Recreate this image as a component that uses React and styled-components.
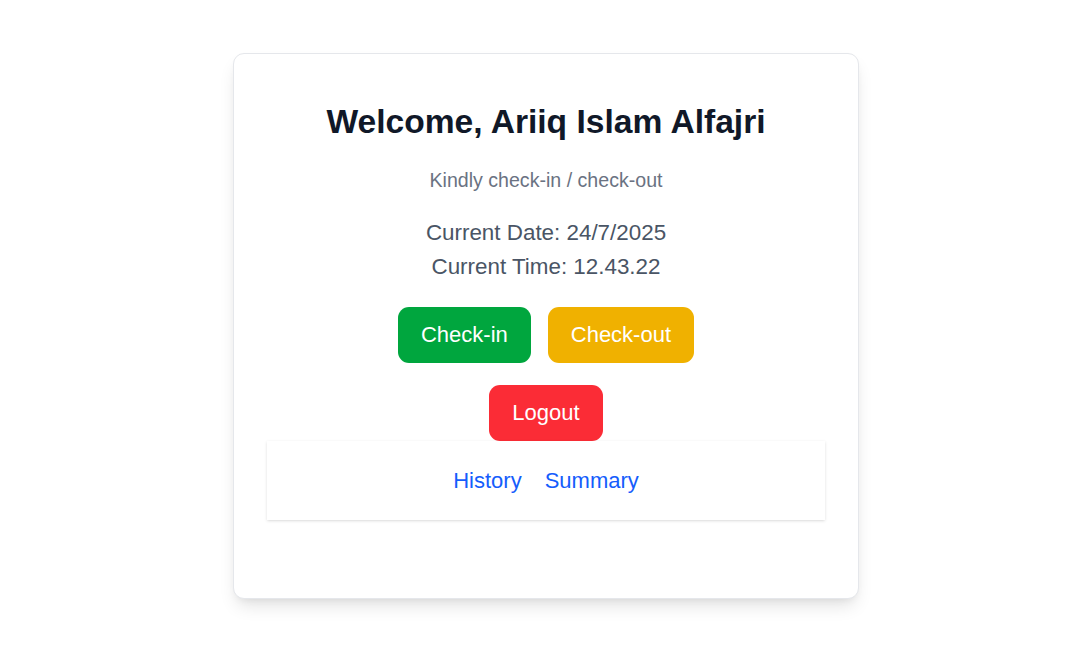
import React from "react";
import styled, { createGlobalStyle } from "styled-components";

const GlobalStyle = createGlobalStyle`
	body {
		margin: 0;
		background: #ffffff;
		font-family: "Liberation Sans", Arial, sans-serif;
	}
`;

const Page = styled.div`
	min-height: 100vh;
	display: flex;
	align-items: center;
	justify-content: center;
	padding: 2px 0 0 11px;
	box-sizing: border-box;
`;

const Card = styled.div`
	width: 626px;
	box-sizing: border-box;
	background: #ffffff;
	border: 1px solid #e5e7eb;
	border-radius: 11px;
	box-shadow: 0 10px 18px -4px rgba(0, 0, 0, 0.12), 0 4px 8px -4px rgba(0, 0, 0, 0.08);
	padding: 48px 33px 78px;
	display: flex;
	flex-direction: column;
	align-items: center;
	text-align: center;
`;

const Title = styled.h1`
	margin: 0;
	font-size: 33.6px;
	line-height: 40px;
	font-weight: bold;
	color: #101828;
`;

const Subtitle = styled.p`
	margin: 24px 0 0;
	font-size: 19.6px;
	line-height: 28px;
	color: #6a7282;
`;

const Clock = styled.div`
	margin-top: 24px;
	display: flex;
	flex-direction: column;
	gap: 4px;
`;

const ClockLine = styled.p`
	margin: 0;
	font-size: 22.4px;
	line-height: 30px;
	color: #4a5565;
`;

const ButtonRow = styled.div`
	display: flex;
	justify-content: center;
	gap: 17px;
	margin-top: ${props => props.$top}px;
`;

const Button = styled.button`
	height: 56px;
	padding: 0 23px;
	border: none;
	border-radius: 11px;
	background: ${props => props.$color};
	color: #ffffff;
	font-family: inherit;
	font-size: 22px;
	cursor: pointer;
`;

const Nav = styled.nav`
	align-self: stretch;
	height: 79px;
	display: flex;
	align-items: center;
	justify-content: center;
	gap: 23px;
	background: #ffffff;
	box-shadow: 0 1px 3px rgba(0, 0, 0, 0.12), 0 1px 2px -1px rgba(0, 0, 0, 0.08);
`;

const NavLink = styled.a`
	font-size: 22px;
	line-height: 30px;
	color: #155dfc;
	text-decoration: none;
`;

const App = () => {
	return (
		<>
			<GlobalStyle />
			<Page>
				<Card>
					<Title>Welcome, Ariiq Islam Alfajri</Title>
					<Subtitle>Kindly check-in / check-out</Subtitle>
					<Clock>
						<ClockLine>Current Date: 24/7/2025</ClockLine>
						<ClockLine>Current Time: 12.43.22</ClockLine>
					</Clock>
					<ButtonRow $top={25}>
						<Button $color="#00a63e">Check-in</Button>
						<Button $color="#f0b100">Check-out</Button>
					</ButtonRow>
					<ButtonRow $top={22}>
						<Button $color="#fb2c36">Logout</Button>
					</ButtonRow>
					<Nav>
						<NavLink href="#">History</NavLink>
						<NavLink href="#">Summary</NavLink>
					</Nav>
				</Card>
			</Page>
		</>
	);
};

export default App;
